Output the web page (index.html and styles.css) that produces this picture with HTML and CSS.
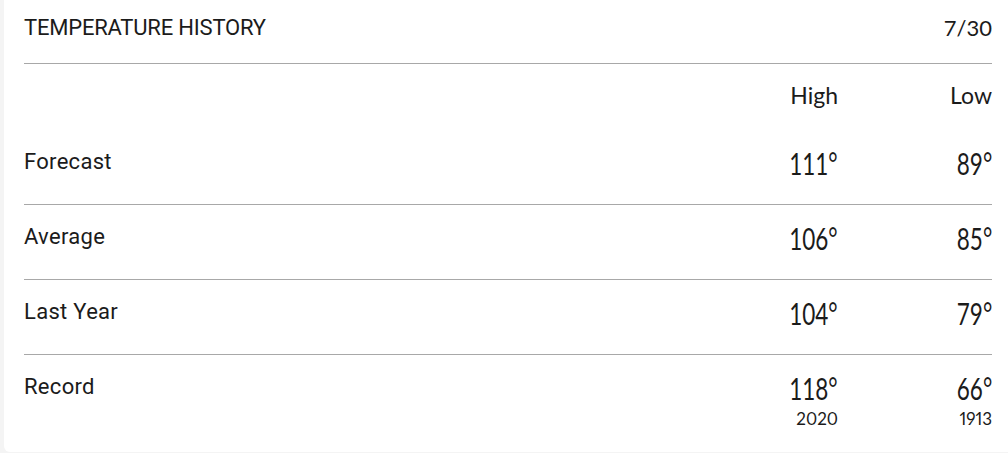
FILE: index.html
```html
<!DOCTYPE html>
<html lang="en">
<head>
<meta charset="utf-8">
<title>Temperature History</title>
<link rel="stylesheet" href="styles.css">
</head>
<body>
<section class="card">
  <header class="card-header">
    <h2 class="title">TEMPERATURE HISTORY</h2>
    <span class="date">7/30</span>
  </header>
  <div class="table">
    <div class="row head-row">
      <span class="label"></span>
      <span class="col-head">High</span>
      <span class="col-head">Low</span>
    </div>
    <div class="row">
      <span class="label">Forecast</span>
      <span class="val"><span class="num">111°</span></span>
      <span class="val"><span class="num">89°</span></span>
    </div>
    <div class="row">
      <span class="label">Average</span>
      <span class="val"><span class="num">106°</span></span>
      <span class="val"><span class="num">85°</span></span>
    </div>
    <div class="row">
      <span class="label">Last Year</span>
      <span class="val"><span class="num">104°</span></span>
      <span class="val"><span class="num">79°</span></span>
    </div>
    <div class="row last">
      <span class="label">Record</span>
      <span class="val"><span class="num">118°</span><small class="year">2020</small></span>
      <span class="val"><span class="num">66°</span><small class="year">1913</small></span>
    </div>
  </div>
</section>
</body>
</html>
```

FILE: styles.css
```css
* { box-sizing: border-box; }
html, body { margin: 0; padding: 0; }
body {
  background: #f4f4f4;
  font-family: Roboto, "Liberation Sans", sans-serif;
  color: #1b1b1b;
  width: 1008px;
  height: 453px;
  overflow: hidden;
}
.card {
  margin-left: 4px;
  height: 452px;
  background: #fff;
  border-radius: 0 0 0 6px;
  padding: 0 16px 0 20px;
}
.card-header {
  display: flex;
  justify-content: space-between;
  align-items: flex-start;
  height: 64px;
  padding-top: 17px;
  border-bottom: 1px solid #a8a8a8;
}
.title {
  margin: 0;
  font-size: 22px;
  font-weight: 400;
  line-height: 22px;
  letter-spacing: -0.2px;
}
.date {
  font-family: Lato, sans-serif;
  font-size: 22px;
  line-height: 22px;
}
.row {
  display: grid;
  grid-template-columns: 1fr 154px 154px;
  align-items: start;
  height: 75px;
  border-bottom: 1px solid #a8a8a8;
}
.head-row {
  height: 66px;
  padding-top: 17px;
  border-bottom: none;
}
.row.last { border-bottom: none; }
.label {
  padding-top: 18px;
  font-size: 22px;
  line-height: 28px;
  letter-spacing: 0.3px;
}
.head-row .label { padding-top: 0; }
.col-head {
  text-align: right;
  font-family: Lato, sans-serif;
  font-size: 23px;
  line-height: 28px;
}
.val {
  padding-top: 19px;
  text-align: right;
  font-family: Lato, sans-serif;
  font-size: 30px;
  line-height: 28px;
}
.num {
  display: inline-block;
  transform: scaleX(0.75);
  transform-origin: right center;
}
.year {
  display: block;
  margin-top: 7px;
  font-size: 17px;
  line-height: 20px;
  font-variant-numeric: proportional-nums;
}
```
